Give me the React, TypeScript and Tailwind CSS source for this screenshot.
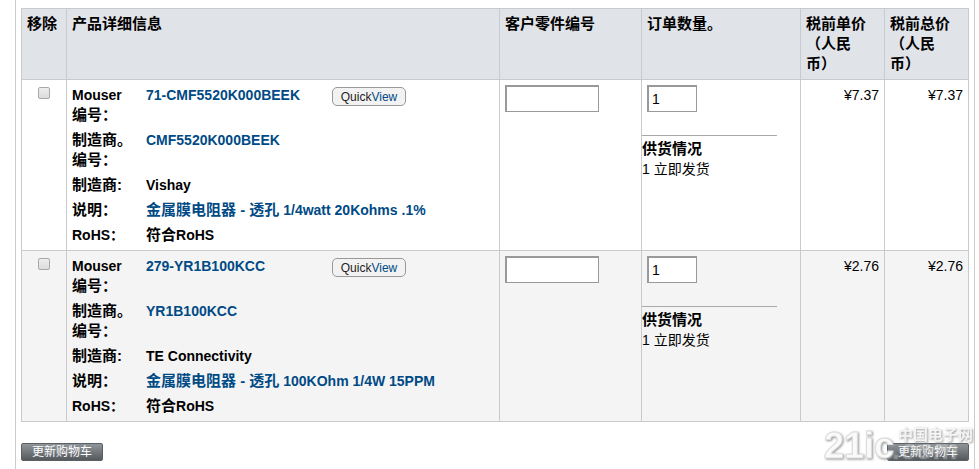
interface CartItem {
  id: string;
  mouserNo: string;
  mfrNo: string;
  maker: string;
  category: string;
  spec: string;
  qty: number;
  price: string;
  total: string;
}

const items: CartItem[] = [
  {
    id: 'cmf55',
    mouserNo: '71-CMF5520K000BEEK',
    mfrNo: 'CMF5520K000BEEK',
    maker: 'Vishay',
    category: '金属膜电阻器 - 透孔',
    spec: '1/4watt 20Kohms .1%',
    qty: 1,
    price: '¥7.37',
    total: '¥7.37',
  },
  {
    id: 'yr1b',
    mouserNo: '279-YR1B100KCC',
    mfrNo: 'YR1B100KCC',
    maker: 'TE Connectivity',
    category: '金属膜电阻器 - 透孔',
    spec: '100KOhm 1/4W 15PPM',
    qty: 1,
    price: '¥2.76',
    total: '¥2.76',
  },
];

const cell = 'border border-[#c8cacc] p-[5px] align-top';
const field =
  'block h-[27px] border border-t-2 border-l-2 border-[#999] bg-white px-[3px] text-sm text-black outline-none';

function UpdateButton() {
  return (
    <button
      type="button"
      className="flex h-[18px] w-[82px] items-center justify-center rounded-[2px] border border-[#5b6065] bg-linear-to-b from-[#8f9499] via-[#73787d] to-[#54595e] text-[12px] leading-4 text-white"
    >
      更新购物车
    </button>
  );
}

function Details({ item }: { item: CartItem }) {
  return (
    <dl className="grid grid-cols-[60px_1fr] gap-x-[14px] gap-y-[5px] font-bold">
      <dt>
        Mouser
        <br />
        <span className="text-[15px]">编号：</span>
      </dt>
      <dd className="flex items-start">
        <a href="#" className="w-[186px] text-[#004a85]">
          {item.mouserNo}
        </a>
        <button
          type="button"
          className="mt-[2px] h-[19px] w-[74px] rounded-[5px] border border-[#999] bg-[#f2f2f2] text-[12px] leading-4 font-normal text-[#222]"
        >
          Quick<span className="text-[#004a85]">View</span>
        </button>
      </dd>
      <dt className="text-[15px]">
        制造商。
        <br />
        编号：
      </dt>
      <dd>
        <a href="#" className="text-[#004a85]">
          {item.mfrNo}
        </a>
      </dd>
      <dt className="text-[15px]">制造商:</dt>
      <dd>{item.maker}</dd>
      <dt className="text-[15px]">说明：</dt>
      <dd>
        <a href="#" className="text-[#004a85]">
          <span className="text-[15px]">{item.category}</span> {item.spec}
        </a>
      </dd>
      <dt>RoHS：</dt>
      <dd>
        <span className="text-[15px]">符合</span>RoHS
      </dd>
    </dl>
  );
}

// Forum logo stamped over the bottom right corner
function Watermark() {
  return (
    <svg
      className="pointer-events-none absolute right-0 bottom-0 h-[50px] w-[155px] drop-shadow-[1px_1px_1px_#999]"
      viewBox="0 0 155 50"
      aria-hidden="true"
      fill="#fff"
      stroke="#ddd"
      strokeWidth="1"
      fontWeight="bold"
    >
      <text x="0" y="39" fontSize="36" fill="#fafafa" fontFamily="'Liberation Sans', sans-serif">
        21ic
      </text>
      <text x="74" y="21" fontSize="15" strokeWidth="0" fill="#f4f4f4" fontFamily="'Noto Sans CJK SC', sans-serif">
        中国电子网
      </text>
      <text
        x="69"
        y="40"
        fontSize="28"
        fontStyle="italic"
        strokeWidth="0"
        fillOpacity="0.25"
        fontFamily="'Liberation Sans', sans-serif"
      >
        .com
      </text>
    </svg>
  );
}

export default function App() {
  return (
    <div className="relative font-['Liberation_Sans','Noto_Sans_CJK_SC',sans-serif] text-sm leading-5 text-black">
      <main className="mr-1 ml-[15px] border-x border-[#ccc] px-[5px] pt-2 pb-2">
        <table className="w-full table-fixed border-collapse">
          <colgroup>
            <col className="w-[45px]" />
            <col />
            <col className="w-[142px]" />
            <col className="w-[159px]" />
            <col className="w-[84px]" />
            <col className="w-[84px]" />
          </colgroup>
          <thead className="bg-[#e0e3e8] text-left text-[15px]">
            <tr>
              <th className={cell}>移除</th>
              <th className={cell}>产品详细信息</th>
              <th className={cell}>客户零件编号</th>
              <th className={cell}>订单数量。</th>
              <th className={cell}>
                税前单价
                <br />
                （人民
                <br />
                币）
              </th>
              <th className={cell}>
                税前总价
                <br />
                （人民
                <br />
                币）
              </th>
            </tr>
          </thead>
          <tbody>
            {items.map((item) => (
              <tr key={item.id} className="even:bg-[#f4f4f4]">
                <td className={cell}>
                  <input
                    type="checkbox"
                    aria-label={`移除 ${item.mouserNo}`}
                    className="mx-auto mt-[2px] block size-3 appearance-none rounded-[2px] border border-[#a8a8a8] bg-linear-to-b from-[#eee] to-[#dcdcdc]"
                  />
                </td>
                <td className={cell}>
                  <Details item={item} />
                </td>
                <td className={cell}>
                  <input type="text" aria-label="客户零件编号" className={`${field} w-[94px]`} />
                </td>
                <td className="border border-[#c8cacc] py-[5px] align-top">
                  <input
                    type="text"
                    aria-label="订单数量"
                    defaultValue={item.qty}
                    className={`${field} ml-[5px] w-[50px]`}
                  />
                  <div className="mt-[23px] mr-[23px] border-t border-[#aaa] pt-[3px]">
                    <p className="text-[15px] font-bold">供货情况</p>
                    <p>{item.qty} 立即发货</p>
                  </div>
                </td>
                <td className={`${cell} text-right`}>{item.price}</td>
                <td className={`${cell} text-right`}>{item.total}</td>
              </tr>
            ))}
          </tbody>
        </table>
        <div className="mt-[21px] flex justify-between">
          <UpdateButton />
          <UpdateButton />
        </div>
      </main>
      <Watermark />
    </div>
  );
}
